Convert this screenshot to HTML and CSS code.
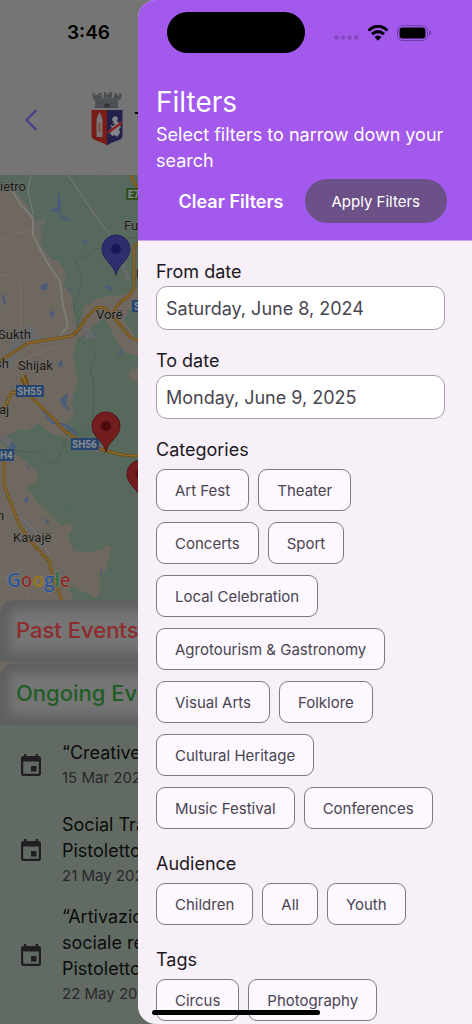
FILE: index.html
```html
<!DOCTYPE html>
<html lang="en">
<head>
<meta charset="utf-8">
<meta name="viewport" content="width=device-width, initial-scale=1">
<title>Filters</title>
<link rel="stylesheet" href="styles.css">
</head>
<body>
<div class="screen">
  <main class="page">
    <header class="page-header">
      <button class="back" type="button" aria-label="Back">
        <svg width="14" height="22" viewBox="0 0 14 22"><path d="M11.500 2 2.500 11l9 9" fill="none" stroke="#4b4080" stroke-width="2.400" stroke-linecap="square"/></svg>
      </button>
      <svg class="crest" width="32" height="55" viewBox="0 0 32 55" aria-hidden="true">
        <path d="M1 1h3v2h3V1h4v5h2V0h2v2h3V0h3v6h2V1h3v2h2V1h3l-1 6-3 2v7H4V9L2 7z" fill="#505356"/>
        <path d="M2 5h8M12 4h9M23 5h7M5 11h8M19 11h8M4 15h24" stroke="#3f4144" stroke-width=".6"/>
        <path d="M13.500 15.500v-3q2.500-3 5 0v3z" fill="#303235"/>
        <path d="M.5 18h15.700v35.500L12 51l-8-3q-3.500-1.500-3.500-5z" fill="#7b1b17"/>
        <path d="M16 18h15.500v25q0 3.500-3.500 5l-8 3-4 2.500z" fill="#22214c"/>
        <path d="M5.500 45V27l1.500-4 1.500-3 1.500 3 1.500 4v18z" fill="#777"/>
        <path d="M7.500 31h2v9h-2z" fill="#8a4a47"/>
        <path d="m22 25 3-1 2 2-1 3 2 2 2-1-1 3 1 2-2 2 1 4-3 4-2-2-3 1-2-3 2-2-3-1 3-2-2-3 3 1 2-2-3-1 2-1-2-2z" fill="#858487"/>
        <path d="m17 39 14-10v3L17 42z" fill="#8b211d"/>
      </svg>
      <h1 class="city">T</h1>
    </header>

    <svg class="map" viewBox="0 0 472 425" preserveAspectRatio="xMinYMin slice" role="img" aria-label="Map of events">
      <rect width="472" height="425" fill="#56695c"/>
      <g fill="#6f6861">
        <path d="M0 17 14 16 25 27 33 42 37 51 43 58 40 68 48 81 61 89 67 101 63 109 71 119 76 150 79 157 84 132 97 124 110 121 124 120 139 110V138L129 134 124 145 133 158 139 168V182L123 176 113 159 104 142 90 155 77 165 73 180 78 205 71 228 75 238 66 249 65 258 70 265 50 258 38 248 28 255 17 255 0 265z"/>
        <path d="M0 268 20 281 34 294Q42 302 36 308L26 312 36 325 52 342 63 352Q71 345 73 354L68 362 74 376 92 377 104 373Q106 368 111 373L106 395 100 403Q101 420 96 423L80 415 66 405 74 425H0z"/>
        <path d="M139 192q-12 3-10 9t10 5z"/>
      </g>
      <g fill="#69686a">
        <path d="m35 47 9-4 2 5-9 5zM18 155l15-5 8 14-20 10-10 18-9-3zM80 150l8 1 8 12-10 1zM124 88l7 18-3 1-8-18zM16 340l12 8 10 15 8 6-2 5-15-19zM90 270l12 0 8 7-16 0zM100 0h6l-2 3zM91 38l4-3 1 5zM0 263h10l4 10-10-4z"/>
      </g>
      <g fill="none" stroke="#7c7b79">
        <path d="M12 15 20 29 33 43 33 60 42 78 50 92 60 106 63 130 68 151 60 160" stroke-width="2"/>
        <path d="M31 0 28 15 33 40M68 0 94 39 110 60 123 80" stroke-width="1"/>
        <path d="M0 64 15 59 31 55M0 101l12-3 9 12v52M0 193l24-9 36-13M11 337l16 10 12 14 10 18M0 405l18-8 12-13M22 400l8 25" stroke-width=".6"/>
      </g>
      <g fill="none" stroke="#445449" stroke-width="1" stroke-dasharray="2 2">
        <path d="M111 70 94 75 76 86 82 106 77 122 73 132 79 144 76 161 90 172 96 180 90 195 94 207V230L92 248 82 260 67 255 64 270 57 288 46 287 38 277 13 276"/>
        <path d="M128 63h11"/>
      </g>
      <g fill="#4a5c79">
        <path d="m58 15 3 13-1 11 7 4 6 3-9-1-7-8-8-1 8-4zM82 66l4-1 2 3-4 2zM41 110l7-2-1 7-6 0zM50 138l3-3 2 5-4 3zM67 115l3-2 0 3zM104 112l9 4-3-6zM118 180l4-7 1 4-4 4zM58 190l3-6 2 6-4 3zM94 157l5 2-4 0zM26 330l-2-6 5-3zM44 343l6 3-4 3zM68 340l5-7-4 5zM99 401l3-9 0 7zM60 224l8-6-2 12 4 6-8-6zM10 266l6 5 4-6-7 11 8 7-11-7zM28 290l3 5-4-3zM65 228l5 6-3 0zM66 331l2 10-1-10zM125 155l3-2-1 3zM52 85l3-3-1 3z"/>
        <path d="m42 234 10 12 14 3 12 10-2 1-12-9-12-2-10-13zM1 117l5 8-2 7-1-6z"/>
      </g>
      <g fill="none" stroke-linejoin="round">
        <g stroke="#705018" stroke-width="3">
          <path d="M0 186 28 168 71 161Q79 157 85 144L94 135Q99 130 106 134L118 147 130 162 139 166M113 137q8-13 14-14 7-8 7-12V72l5-5M21 203l10 18-6-21M31 222l24 23 8 10 12 8 28 12 20 5 16 1M30 221l-18-4-7 15-5 4M4 285V310L19 349 29 365 49 386 53 402 62 425M130 0l9 15"/>
        </g>
        <g stroke="#957334" stroke-width="1">
          <path d="M0 186 28 168 71 161Q79 157 85 144L94 135Q99 130 106 134L118 147 130 162 139 166M113 137q8-13 14-14 7-8 7-12V72l5-5M31 222l24 23 8 10 12 8 28 12 20 5 16 1M30 221l-18-4-7 15-5 4M4 285V310L19 349 29 365 49 386 53 402 62 425M130 0l9 15M21 197l10 24"/>
        </g>
      </g>
      <g class="map-road">
        <rect x="126" y="13" width="24" height="12" fill="#32511e"/><text x="128" y="23">E7</text>
        <rect x="132" y="125" width="24" height="12" fill="#25456f"/><text x="134" y="135">S</text>
        <rect x="16" y="210" width="28" height="12" fill="#25456f"/><text x="17" y="220">SH55</text>
        <rect x="71" y="263" width="28" height="12" fill="#25456f"/><text x="72" y="273">SH56</text>
        <rect x="-14" y="274" width="28" height="12" fill="#25456f"/><text x="0" y="284">H4</text>
      </g>
      <g class="map-label">
        <text x="0" y="16">ietro</text>
        <text x="124" y="55">Fu</text>
        <text x="136" y="103">F</text>
        <text x="96" y="144">Vorë</text>
        <text x="-2" y="164">Sukth</text>
        <text x="-5" y="193">sh</text>
        <text x="18" y="195">Shijak</text>
        <text x="-1" y="239">aj</text>
        <text x="-3" y="345">n</text>
        <text x="13" y="367">Kavajë</text>
      </g>
      <g fill="#2f2d6d" stroke="#242260" stroke-width="1"><path d="M116 100C114 89 102 85 102 74A14 14 0 0 1 130 74C130 85 118 89 116 100z"/><circle cx="116" cy="74" r="5" fill="#17165a"/></g>
      <g id="red-pin" fill="#731d1f" stroke="#551315" stroke-width="1"><path d="M106 277C104 266 92 262 92 251A14 14 0 0 1 120 251C120 262 108 266 106 277z"/><circle cx="106" cy="251" r="5" fill="#4b0b0d"/></g>
      <use href="#red-pin" x="35" y="48"/>
      <text class="map-logo" x="7" y="412"><tspan fill="#2c5494">G</tspan><tspan fill="#8b2c27">o</tspan><tspan fill="#94700c">o</tspan><tspan fill="#2c5494">g</tspan><tspan fill="#27703a">l</tspan><tspan fill="#8b2c27">e</tspan></text>
    </svg>

    <div class="tabs">
      <h2 class="tab tab-past">Past Events</h2>
      <h2 class="tab tab-ongoing">Ongoing Eve</h2>
    </div>

    <ul class="events">
      <li class="event">
        <svg class="event-icon" viewBox="0 0 20 22"><path d="M17.800 2H17V0h-2.300v2H5.300V0H3v2h-.800C1 2 0 3 0 4.200v15.600C0 21 1 22 2.200 22h15.600c1.200 0 2.200-1 2.200-2.200V4.200C20 3 19 2 17.800 2zM17.800 19.800H2.200V7.500h15.600zM10 12h5.500v5.500H10z" fill-rule="evenodd"/></svg>
        <div><p class="event-title">“Creative</p><p class="event-date">15 Mar 202</p></div>
      </li>
      <li class="event">
        <svg class="event-icon" viewBox="0 0 20 22"><path d="M17.800 2H17V0h-2.300v2H5.300V0H3v2h-.800C1 2 0 3 0 4.200v15.600C0 21 1 22 2.200 22h15.600c1.200 0 2.200-1 2.200-2.200V4.200C20 3 19 2 17.800 2zM17.800 19.800H2.200V7.500h15.600zM10 12h5.500v5.500H10z" fill-rule="evenodd"/></svg>
        <div><p class="event-title">Social Tra<br>Pistoletto</p><p class="event-date">21 May 202</p></div>
      </li>
      <li class="event">
        <svg class="event-icon" viewBox="0 0 20 22"><path d="M17.800 2H17V0h-2.300v2H5.300V0H3v2h-.800C1 2 0 3 0 4.200v15.600C0 21 1 22 2.200 22h15.600c1.200 0 2.200-1 2.200-2.200V4.200C20 3 19 2 17.800 2zM17.800 19.800H2.200V7.500h15.600zM10 12h5.500v5.500H10z" fill-rule="evenodd"/></svg>
        <div><p class="event-title">“Artivazio<br>sociale re<br>Pistoletto</p><p class="event-date">22 May 202</p></div>
      </li>
    </ul>
  </main>

  <form class="drawer">
    <header class="drawer-header">
      <h2 class="drawer-title">Filters</h2>
      <p class="drawer-text">Select filters to narrow down your search</p>
      <div class="actions">
        <button class="clear" type="reset">Clear Filters</button>
        <button class="apply" type="button">Apply Filters</button>
      </div>
    </header>
    <div class="drawer-body">
      <div class="field">
        <label class="label" for="from">From date</label>
        <input class="date" id="from" type="text" value="Saturday, June 8, 2024">
      </div>
      <div class="field">
        <label class="label" for="to">To date</label>
        <input class="date" id="to" type="text" value="Monday, June 9, 2025">
      </div>
      <section class="group">
        <h3 class="label">Categories</h3>
        <div class="chips">
          <button class="chip" type="button">Art Fest</button>
          <button class="chip" type="button">Theater</button>
          <button class="chip" type="button">Concerts</button>
          <button class="chip" type="button">Sport</button>
          <button class="chip" type="button">Local Celebration</button>
          <button class="chip" type="button">Agrotourism &amp; Gastronomy</button>
          <button class="chip" type="button">Visual Arts</button>
          <button class="chip" type="button">Folklore</button>
          <button class="chip" type="button">Cultural Heritage</button>
          <button class="chip" type="button">Music Festival</button>
          <button class="chip" type="button">Conferences</button>
        </div>
      </section>
      <section class="group">
        <h3 class="label">Audience</h3>
        <div class="chips">
          <button class="chip" type="button">Children</button>
          <button class="chip" type="button">All</button>
          <button class="chip" type="button">Youth</button>
        </div>
      </section>
      <section class="group">
        <h3 class="label">Tags</h3>
        <div class="chips">
          <button class="chip" type="button">Circus</button>
          <button class="chip" type="button">Photography</button>
        </div>
      </section>
    </div>
  </form>

  <div class="status">
    <span class="time">3:46</span>
    <span class="island"></span>
    <span class="indicators">
      <svg width="25" height="5" viewBox="0 0 25 5" fill="#844abd"><circle cx="2.500" cy="2.500" r="2.200"/><circle cx="9" cy="2.500" r="2.200"/><circle cx="15.700" cy="2.500" r="2.200"/><circle cx="22.300" cy="2.500" r="2.200"/></svg>
      <svg width="22" height="16" viewBox="0 0 22 16"><path d="M1.500 5.500Q11-3 20.500 5.500M5 9.200q6-5.200 12 0" fill="none" stroke="#000" stroke-width="3"/><path d="M7.500 12q3.500-3 7 0L11 15.800z"/></svg>
      <svg width="35" height="16" viewBox="0 0 35 16"><rect x=".5" y=".5" width="30" height="15" rx="5" fill="none" stroke="#6f3da3"/><rect x="2.500" y="2.500" width="26" height="11" rx="3.200"/><path d="M32.300 5.200q2 .8 2 2.800t-2 2.800z" fill="#6f3da3"/></svg>
    </span>
  </div>
  <div class="home-bar"></div>
</div>
</body>
</html>
```

FILE: styles.css
```css
* { box-sizing: border-box; }

body, h1, h2, h3, p, ul { margin: 0; padding: 0; }

body, button, input { font-family: Inter, "Noto Sans", sans-serif; }

button { border: 0; background: none; padding: 0; }

.screen {
  position: relative;
  height: 100vh;
  overflow: hidden;
  background: #626b63;
}

.page-header {
  display: flex;
  align-items: center;
  height: 175px;
  padding: 64px 24px 0;
  background: #757575;
}

.back { display: flex; width: 14px; }

.crest { margin-left: 53px; }

.city {
  margin-left: 11px;
  font-size: 22px;
  font-weight: 500;
}

.map { display: block; width: 100%; height: 425px; }

.map-label {
  font: 13px Roboto, sans-serif;
  fill: #171717;
  stroke: #77736d;
  stroke-width: 1px;
  paint-order: stroke;
}

.map-road { font: 700 10px Roboto, sans-serif; fill: #8b8e91; }

.map-logo {
  font: 600 19px "Open Sans", sans-serif;
  stroke: #858585;
  stroke-width: 1px;
  paint-order: stroke;
}

.tabs { display: grid; gap: 1px; background: #6f6861; }

.tab {
  height: 62px;
  padding-left: 16px;
  border-radius: 14px 14px 0 0;
  background: #757575;
  box-shadow: inset 0 0 10px 10px #606060;
  font-size: 22px;
  font-weight: 500;
  line-height: 60px;
  white-space: nowrap;
}

.tab-past { color: #8d2c2c; }
.tab-ongoing { color: #215d26; }

.events { list-style: none; }

.event {
  display: flex;
  align-items: center;
  gap: 21px;
  min-height: 79px;
  padding: 8px 21px;
}

.event-icon { flex: none; width: 20px; height: 22px; fill: #211e23; }

.event-title {
  font-size: 18px;
  line-height: 26px;
  color: #0c0c0c;
  white-space: nowrap;
}

.event-date {
  font-size: 15px;
  line-height: 24px;
  color: #29272b;
  white-space: nowrap;
}

.drawer {
  position: absolute;
  inset: 0 0 0 138px;
  overflow: hidden;
  border-radius: 18px 0 0 18px;
  background: #f7f0f9;
}

.drawer-header {
  padding: 85px 18px 17px;
  border-bottom: 1px solid #c9a3ed;
  background: #a259ec;
  color: #fff;
}

.drawer-title { font-size: 28px; font-weight: 400; line-height: 34px; }

.drawer-text { padding: 3px 0 5px; font-size: 18px; line-height: 26px; }

.actions {
  display: flex;
  justify-content: flex-end;
  align-items: center;
  gap: 21px;
  padding-right: 7px;
}

.clear { font-size: 18px; font-weight: 600; color: #fff; }

.apply {
  height: 44px;
  padding: 0 27px;
  border-radius: 22px;
  background: #6c5188;
  font-size: 15px;
  color: #fff;
}

.drawer-body { padding: 18px 18px 0; }

.field { margin-bottom: 18px; padding-right: 9px; }

.label {
  display: block;
  font-size: 18px;
  font-weight: 400;
  line-height: 26px;
  color: #1b1820;
}

.date {
  display: block;
  width: 100%;
  height: 44px;
  margin-top: 1px;
  padding: 0 9px;
  border: 1px solid #a3a0a6;
  border-radius: 11px;
  background: #fff;
  font-size: 18px;
  color: #49454f;
}

.group { margin-bottom: 22px; }

.chips {
  display: flex;
  flex-wrap: wrap;
  gap: 11px 9px;
  padding-top: 6px;
}

.chip {
  height: 42px;
  padding: 0 18px;
  border: 1px solid #7d7882;
  border-radius: 9px;
  background: #fdf7ff;
  font-size: 15px;
  color: #49454f;
}

.status {
  position: absolute;
  inset: 12px 40px auto 67px;
  display: flex;
  align-items: center;
  height: 41px;
}

.time { width: 100px; font-size: 19px; font-weight: 600; }

.island { width: 138px; height: 41px; border-radius: 21px; background: #000; }

.indicators {
  display: flex;
  align-items: center;
  gap: 8px;
  margin-left: auto;
}

.indicators svg:first-child { margin-top: 10px; }

.home-bar {
  position: absolute;
  bottom: 9px;
  left: 50%;
  width: 168px;
  height: 5px;
  margin-left: -84px;
  border-radius: 3px;
  background: #000;
}
```
